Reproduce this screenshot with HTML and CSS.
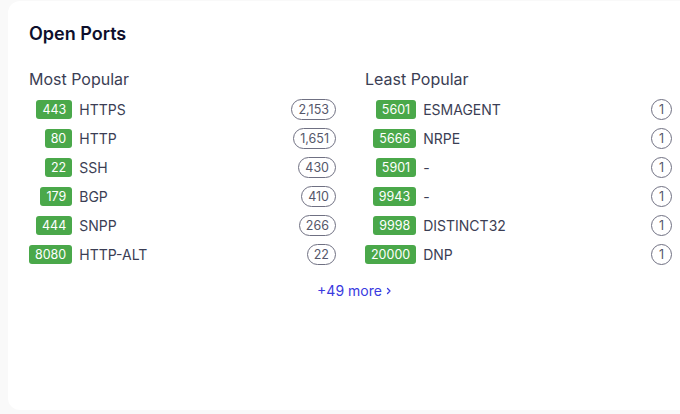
FILE: index.html
```html
<!DOCTYPE html>
<html lang="en">
<head>
    <meta charset="UTF-8">
    <meta name="viewport" content="width=device-width, initial-scale=1.0">
    <title>Open Ports</title>
    <link rel="stylesheet" href="styles.css">
</head>
<body>
    <div class="card">
        <h2 class="card-title">Open Ports</h2>

        <div class="columns">
            <!-- Mais populares -->
            <div class="column">
                <h3 class="column-title">Most Popular</h3>
                <div class="port-list">
                    <span class="port">443</span><span class="service">HTTPS</span><span class="count">2,153</span>
                    <span class="port">80</span><span class="service">HTTP</span><span class="count">1,651</span>
                    <span class="port">22</span><span class="service">SSH</span><span class="count">430</span>
                    <span class="port">179</span><span class="service">BGP</span><span class="count">410</span>
                    <span class="port">444</span><span class="service">SNPP</span><span class="count">266</span>
                    <span class="port">8080</span><span class="service">HTTP-ALT</span><span class="count">22</span>
                </div>
            </div>

            <!-- Menos populares -->
            <div class="column">
                <h3 class="column-title">Least Popular</h3>
                <div class="port-list">
                    <span class="port">5601</span><span class="service">ESMAGENT</span><span class="count">1</span>
                    <span class="port">5666</span><span class="service">NRPE</span><span class="count">1</span>
                    <span class="port">5901</span><span class="service">-</span><span class="count">1</span>
                    <span class="port">9943</span><span class="service">-</span><span class="count">1</span>
                    <span class="port">9998</span><span class="service">DISTINCT32</span><span class="count">1</span>
                    <span class="port">20000</span><span class="service">DNP</span><span class="count">1</span>
                </div>
            </div>
        </div>

        <a class="more-link" href="#">+49 more
            <svg width="8" height="8" viewBox="0 0 8 8"><path d="M2.5 1.5 L5 4 L2.5 6.5" fill="none" stroke="currentColor" stroke-width="1.3" stroke-linecap="round" stroke-linejoin="round"/></svg>
        </a>
    </div>
</body>
</html>
```

FILE: styles.css
```css
body {
    font-family: Inter, "Noto Sans", sans-serif;
    margin: 0;
    padding: 1px 0 0 8px;
    background-color: #f9f9f9;
    overflow: hidden;
    height: 414px;
    box-sizing: border-box;
}

.card {
    width: 685px;
    height: 409px;
    box-sizing: border-box;
    padding: 23px 21px 0 21px;
    background: #fff;
    border-radius: 12px;
}

.card-title {
    margin: 0;
    font-size: 18px;
    font-weight: 600;
    line-height: 20px;
    color: #0e0f2c;
}

.columns {
    display: grid;
    grid-template-columns: 1fr 1fr;
    column-gap: 29px;
    margin-top: 25px;
}

.column-title {
    margin: 0 0 6px 0;
    font-size: 16px;
    font-weight: 400;
    line-height: 20px;
    color: #3b3e54;
}

.port-list {
    display: grid;
    grid-template-columns: auto 1fr auto;
    grid-auto-rows: 29px;
    align-items: center;
    column-gap: 7px;
}

.port {
    justify-self: end;
    background-color: #4aa84a;
    color: #fff;
    font-size: 12.5px;
    line-height: 19px;
    padding: 0 6px;
    border-radius: 3px;
}

.service {
    font-size: 14px;
    color: #3b3e54;
}

.count {
    justify-self: end;
    min-width: 21px;
    height: 21px;
    box-sizing: border-box;
    padding: 0 6px;
    border: 1px solid #6f7082;
    border-radius: 11px;
    font-size: 12.5px;
    line-height: 19px;
    text-align: center;
    color: #55576a;
}

.more-link {
    display: flex;
    justify-content: center;
    align-items: center;
    gap: 3px;
    margin-top: 13px;
    padding-left: 9px;
    font-size: 14px;
    color: #3a3ae0;
    text-decoration: none;
}
```
